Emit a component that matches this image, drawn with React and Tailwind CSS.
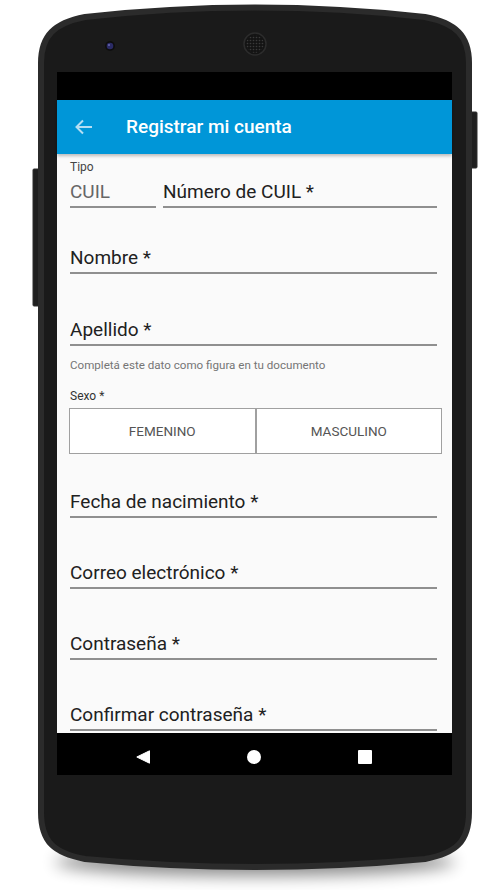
import React from 'react';

const font = { fontFamily: 'Roboto, "Noto Sans", sans-serif' };

function PhoneFrame() {
  return (
    <svg className="absolute inset-0" width="500" height="890" viewBox="0 0 500 890">
      <defs>
        <filter id="blur" x="-20%" y="-100%" width="140%" height="300%">
          <feGaussianBlur stdDeviation="8" />
        </filter>
        <pattern id="grill" width="3" height="3" patternUnits="userSpaceOnUse">
          <circle cx="1.5" cy="1.5" r="0.8" fill="#3a3a3a" />
        </pattern>
      </defs>
      {/* shadow */}
      <ellipse cx="255" cy="862" rx="200" ry="14" fill="#000" opacity="0.45" filter="url(#blur)" />
      {/* side buttons */}
      <rect x="33" y="169" width="7" height="137" rx="1" fill="#1f1f1f" stroke="#2f2f2f" />
      <rect x="470" y="112" width="7" height="56" rx="1" fill="#1f1f1f" stroke="#2f2f2f" />
      {/* body */}
      <path
        d="M41,63 C41,36 54,23 85,17 Q255,-2 425,17 C456,23 469,36 469,63 L469,812 C469,842 456,853 425,859 Q255,875 85,859 C54,853 41,842 41,812 Z"
        fill="#1a1a1a"
        stroke="#2b2b2b"
        strokeWidth="6"
      />
      {/* camera */}
      <circle cx="110" cy="46" r="5" fill="#0e0e0e" />
      <circle cx="110" cy="46" r="3.3" fill="#2b2b66" />
      <circle cx="109" cy="45" r="1" fill="#6a6ab0" />
      {/* speaker */}
      <circle cx="255" cy="44" r="11" fill="#141414" stroke="#2c2c2c" strokeWidth="1.5" />
      <circle cx="255" cy="44" r="9" fill="url(#grill)" />
    </svg>
  );
}

function Field({ label, className = '' }) {
  return (
    <div className={className}>
      <div className="text-[19px] leading-[22px] text-[#212121] whitespace-nowrap">{label}</div>
      <div className="mt-[3px] h-[2px] bg-[#8f8f8f]" />
    </div>
  );
}

export default function App() {
  return (
    <div className="relative w-[500px] h-[890px] bg-white overflow-hidden pt-[72px]" style={font}>
      <PhoneFrame />

      <div className="relative ml-[57px] w-[395px] h-[703px] flex flex-col bg-black">
        {/* status bar */}
        <div className="h-[28px] bg-black" />

        {/* app bar */}
        <div className="relative z-10 h-[54px] bg-[#0096d8] flex items-center pl-[15px] shadow-[0_2px_3px_rgba(0,0,0,0.25)]">
          <svg width="24" height="24" viewBox="0 0 24 24" fill="none" stroke="#b5def3" strokeWidth="2">
            <path d="M4.5 12H20" />
            <path d="M11 5.5 4.5 12 11 18.5" />
          </svg>
          <h1 className="ml-[30px] text-[19px] font-medium text-white">Registrar mi cuenta</h1>
        </div>

        {/* form */}
        <div className="flex-1 overflow-hidden bg-[#fafafa] pt-[5px] pl-[13px] pr-[15px]">
          <div className="flex items-end gap-[7px]">
            <div className="w-[86px]">
              <div className="text-[12px] leading-[16px] text-[#444]">Tipo</div>
              <div className="mt-[6px]">
                <div className="text-[19px] leading-[22px] text-[#666]">CUIL</div>
                <div className="mt-[3px] h-[2px] bg-[#8f8f8f]" />
              </div>
            </div>
            <Field label="Número de CUIL *" className="flex-1" />
          </div>

          <Field label="Nombre *" className="mt-[39px]" />
          <Field label="Apellido *" className="mt-[45px]" />

          <p className="mt-[11px] text-[11.6px] leading-[16px] text-[#757575]">
            Completá este dato como figura en tu documento
          </p>
          <p className="mt-[15px] text-[12px] leading-[16px] text-[#333]">Sexo *</p>

          <div className="mt-[4px] -ml-px -mr-[5px] flex h-[46px]">
            <button className="flex-1 bg-white border-[1.5px] border-[#a0a0a0] text-[13.5px] text-[#555]">
              FEMENINO
            </button>
            <button className="flex-1 bg-white border-[1.5px] border-[#a0a0a0] text-[13.5px] text-[#555]">
              MASCULINO
            </button>
          </div>

          <Field label="Fecha de nacimiento *" className="mt-[37px]" />
          <Field label="Correo electrónico *" className="mt-[44px]" />
          <Field label="Contraseña *" className="mt-[44px]" />
          <Field label="Confirmar contraseña *" className="mt-[44px]" />
        </div>

        {/* nav bar */}
        <div className="h-[42px] bg-black flex items-start pt-[17px] pl-[79px] gap-[97px]">
          <svg width="14" height="14" viewBox="0 0 14 14">
            <path d="M13.5 0.8 V13.2 L0.8 7 Z" fill="#fff" strokeLinejoin="round" stroke="#fff" strokeWidth="1" />
          </svg>
          <svg width="14" height="14" viewBox="0 0 14 14">
            <circle cx="7" cy="7" r="7" fill="#fff" />
          </svg>
          <svg width="14" height="14" viewBox="0 0 14 14">
            <rect x="0" y="0" width="14" height="14" rx="1" fill="#fff" />
          </svg>
        </div>
      </div>
    </div>
  );
}
